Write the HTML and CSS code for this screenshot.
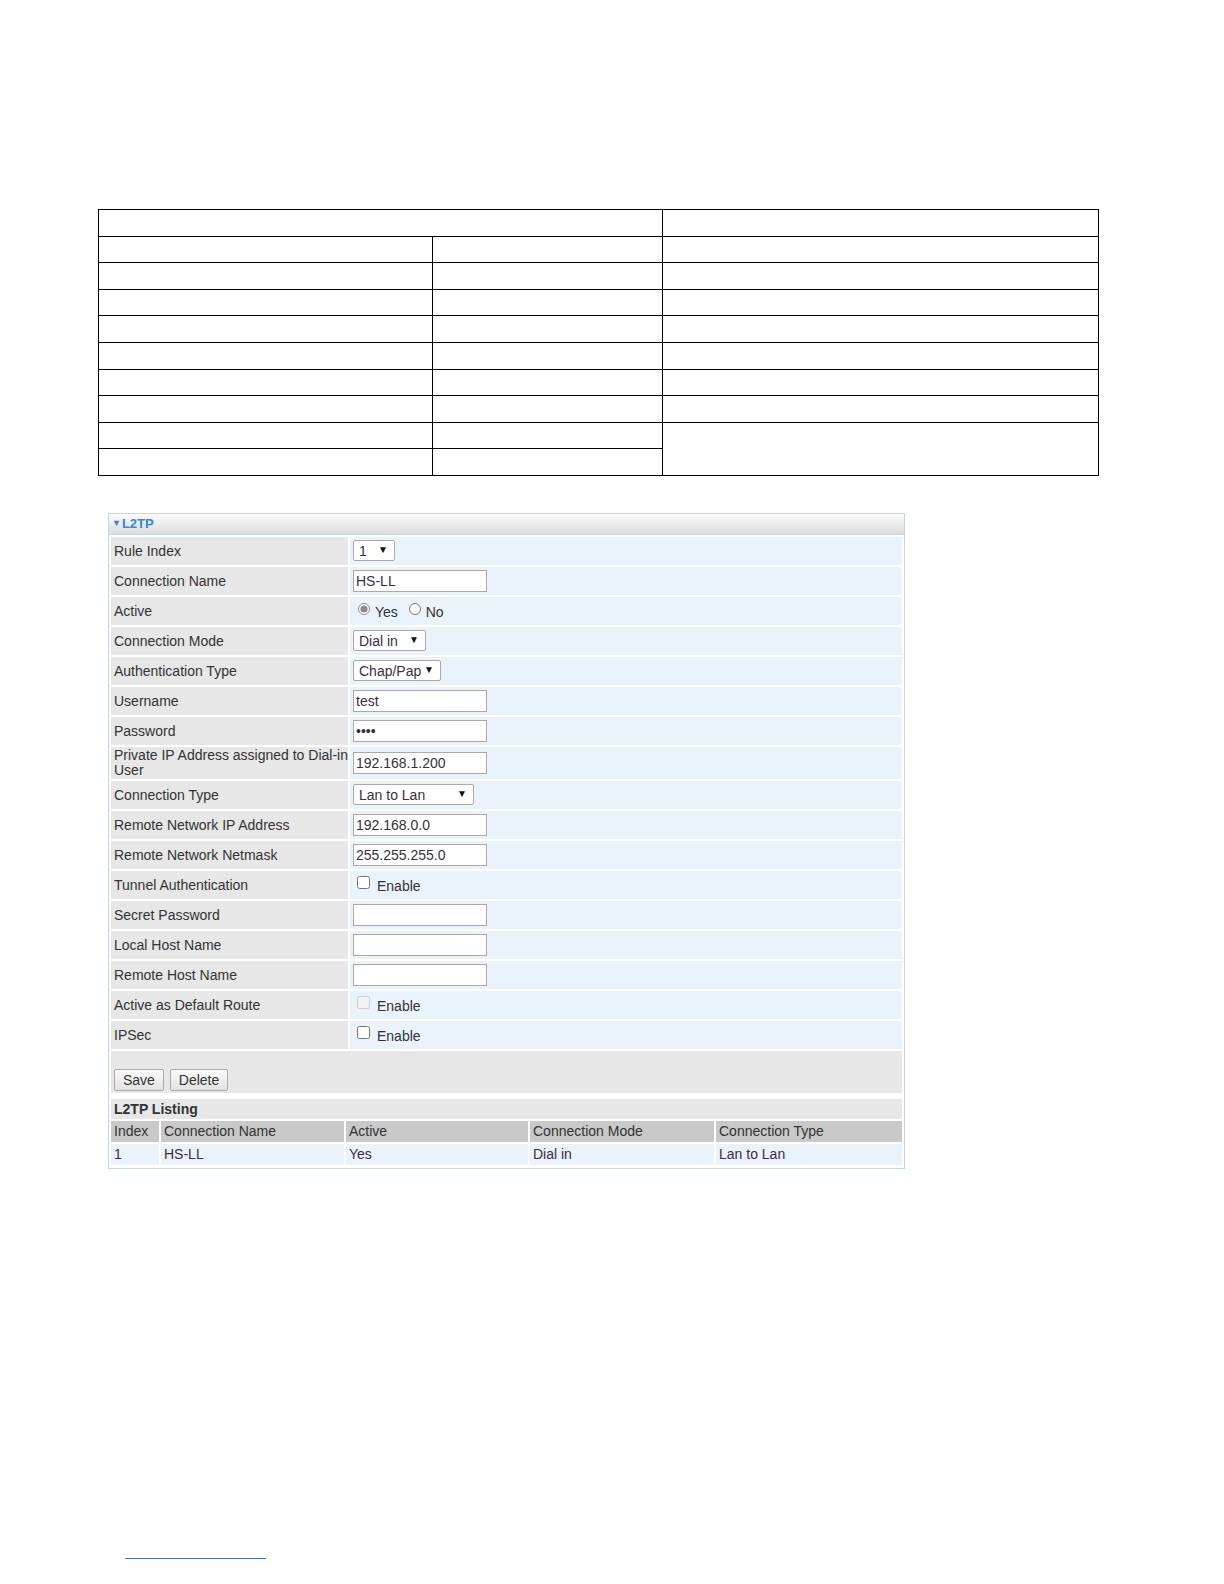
FILE: index.html
```html
<!DOCTYPE html>
<html lang="en">
<head>
    <meta charset="UTF-8">
    <title>L2TP</title>
    <link rel="stylesheet" href="styles.css">
</head>
<body>
    <div class="page">
        <table class="grid">
            <tr><td colspan="2"></td><td></td></tr>
            <tr><td class="c1"></td><td class="c2"></td><td></td></tr>
            <tr><td></td><td></td><td></td></tr>
            <tr><td></td><td></td><td></td></tr>
            <tr><td></td><td></td><td></td></tr>
            <tr><td></td><td></td><td></td></tr>
            <tr><td></td><td></td><td></td></tr>
            <tr><td></td><td></td><td></td></tr>
            <tr><td></td><td></td><td rowspan="2"></td></tr>
            <tr><td></td><td></td></tr>
        </table>

        <div class="panel">
            <div class="panel-head"><span class="tri">&#9660;</span>L2TP</div>
            <table class="form">
                <tr>
                    <td class="lbl">Rule Index</td>
                    <td class="val"><span class="sel w42"><select><option>1</option></select></span></td>
                </tr>
                <tr>
                    <td class="lbl">Connection Name</td>
                    <td class="val"><input type="text" value="HS-LL"></td>
                </tr>
                <tr>
                    <td class="lbl">Active</td>
                    <td class="val">
                        <label class="opt"><input type="radio" name="active" checked> Yes</label>
                        <label class="opt"><input type="radio" name="active"> No</label>
                    </td>
                </tr>
                <tr>
                    <td class="lbl">Connection Mode</td>
                    <td class="val"><span class="sel w73"><select><option>Dial in</option></select></span></td>
                </tr>
                <tr>
                    <td class="lbl">Authentication Type</td>
                    <td class="val"><span class="sel w88"><select><option>Chap/Pap</option></select></span></td>
                </tr>
                <tr>
                    <td class="lbl">Username</td>
                    <td class="val"><input type="text" value="test"></td>
                </tr>
                <tr>
                    <td class="lbl">Password</td>
                    <td class="val"><input type="password" value="test"></td>
                </tr>
                <tr class="tall">
                    <td class="lbl">Private IP Address assigned to Dial-in User</td>
                    <td class="val"><input type="text" value="192.168.1.200"></td>
                </tr>
                <tr>
                    <td class="lbl">Connection Type</td>
                    <td class="val"><span class="sel w121"><select><option>Lan to Lan</option></select></span></td>
                </tr>
                <tr>
                    <td class="lbl">Remote Network IP Address</td>
                    <td class="val"><input type="text" value="192.168.0.0"></td>
                </tr>
                <tr>
                    <td class="lbl">Remote Network Netmask</td>
                    <td class="val"><input type="text" value="255.255.255.0"></td>
                </tr>
                <tr>
                    <td class="lbl">Tunnel Authentication</td>
                    <td class="val"><label class="chk"><input type="checkbox"> Enable</label></td>
                </tr>
                <tr>
                    <td class="lbl">Secret Password</td>
                    <td class="val"><input type="text"></td>
                </tr>
                <tr>
                    <td class="lbl">Local Host Name</td>
                    <td class="val"><input type="text"></td>
                </tr>
                <tr>
                    <td class="lbl">Remote Host Name</td>
                    <td class="val"><input type="text"></td>
                </tr>
                <tr>
                    <td class="lbl">Active as Default Route</td>
                    <td class="val"><label class="chk"><input type="checkbox" disabled> Enable</label></td>
                </tr>
                <tr>
                    <td class="lbl">IPSec</td>
                    <td class="val"><label class="chk"><input type="checkbox"> Enable</label></td>
                </tr>
                <tr class="actions">
                    <td colspan="2">
                        <button type="button">Save</button>
                        <button type="button">Delete</button>
                    </td>
                </tr>
            </table>
            <div class="list-title">L2TP Listing</div>
            <table class="listing">
                <tr>
                    <th class="l1">Index</th>
                    <th class="l2">Connection Name</th>
                    <th class="l3">Active</th>
                    <th class="l4">Connection Mode</th>
                    <th>Connection Type</th>
                </tr>
                <tr>
                    <td>1</td>
                    <td>HS-LL</td>
                    <td>Yes</td>
                    <td>Dial in</td>
                    <td>Lan to Lan</td>
                </tr>
            </table>
        </div>

        <div class="footnote-rule"></div>
    </div>
</body>
</html>
```

FILE: styles.css
```css
html,
body {
    margin: 0;
    padding: 0;
    background: #fff;
    font-family: "Liberation Sans", Arial, sans-serif;
}

.page {
    padding-top: 209px;
}

/* empty parameter table */
.grid {
    margin-left: 98px;
    width: 1001px;
    border-collapse: collapse;
}

.grid td {
    border: 1.3px solid #000;
    height: 25.6px;
    padding: 0;
}

.grid td.c1 {
    width: 333px;
}

.grid td.c2 {
    width: 229px;
}

/* L2TP panel */
.panel {
    margin: 37px 0 0 108px;
    width: 795px;
    border: 1px solid #c6d6e6;
    font-size: 14px;
    color: #333;
}

.panel-head {
    height: 20px;
    line-height: 18px;
    padding-left: 3px;
    background: linear-gradient(#fbfbfb, #dcdcdc);
    border-bottom: 1px solid #c9d7e5;
    color: #2b8bd4;
    font-weight: bold;
    font-size: 13px;
}

.panel-head .tri {
    font-size: 9px;
    vertical-align: 2px;
    margin-right: 1px;
}

.form {
    width: 100%;
    border-spacing: 2px;
}

.form td {
    height: 28px;
    padding: 0 0 0 3px;
}

.form tr.tall td {
    height: 32px;
    line-height: 15px;
}

.form td.lbl {
    width: 234px;
    background: #e7e7e7;
}

.form td.val {
    background: #eaf2fb;
}

.form input[type="text"],
.form input[type="password"] {
    width: 134px;
    height: 22px;
    box-sizing: border-box;
    border: 1px solid #a9a9a9;
    padding: 0 2px;
    font: 14px "Liberation Sans", Arial, sans-serif;
    color: #3b2d45;
    background: #fff;
}

.sel {
    display: inline-block;
    position: relative;
    height: 21px;
    vertical-align: middle;
}

.sel select {
    appearance: none;
    -webkit-appearance: none;
    width: 100%;
    height: 21px;
    border: 1px solid #a9a9a9;
    border-radius: 2px;
    background: #fff;
    padding: 0 0 0 5px;
    font: 14px "Liberation Sans", Arial, sans-serif;
    color: #3b2d45;
}

.sel::after {
    content: "\25BC";
    position: absolute;
    right: 7px;
    top: 4px;
    font-size: 10px;
    color: #111;
    pointer-events: none;
}

.w42 { width: 42px; }
.w73 { width: 73px; }
.w88 { width: 88px; }
.w121 { width: 121px; }

.opt,
.chk {
    display: inline-flex;
    align-items: center;
    gap: 5px;
    margin-left: 5px;
    margin-right: 2px;
    padding-top: 3px;
}

.chk {
    gap: 7px;
    margin-left: 4px;
}

.opt input,
.chk input {
    margin: 0;
    position: relative;
    top: -3px;
    accent-color: #8c8c8c;
}

.opt input {
    width: 12px;
    height: 12px;
}

.chk input {
    width: 13px;
    height: 13px;
}

.form tr.actions td {
    height: 40px;
    background: #e7e7e7;
    vertical-align: bottom;
    padding: 0 0 2px 3px;
}

.actions button {
    height: 22px;
    padding: 0 8px;
    margin-right: 2px;
    border: 1px solid #a9a9a9;
    border-radius: 2px;
    background: linear-gradient(#fafafa, #e2e2e2);
    font: 14px "Liberation Sans", Arial, sans-serif;
    color: #333;
}

.list-title {
    margin: 4px 2px 0;
    height: 20px;
    line-height: 20px;
    padding-left: 3px;
    background: #e7e7e7;
    font-weight: bold;
}

.listing {
    width: 100%;
    border-spacing: 2px;
    margin-bottom: 1px;
}

.listing th,
.listing td {
    height: 21px;
    padding: 0 3px;
    text-align: left;
    font-weight: normal;
}

.listing th {
    background: #c9c9c9;
}

.listing td {
    background: #eaf2fb;
    color: #3b2d45;
}

.listing .l1 { width: 42px; }
.listing .l2 { width: 177px; }
.listing .l3 { width: 176px; }
.listing .l4 { width: 178px; }

.footnote-rule {
    margin: 389px 0 0 125px;
    width: 141px;
    border-top: 1px solid #4a6fc0;
}
```
